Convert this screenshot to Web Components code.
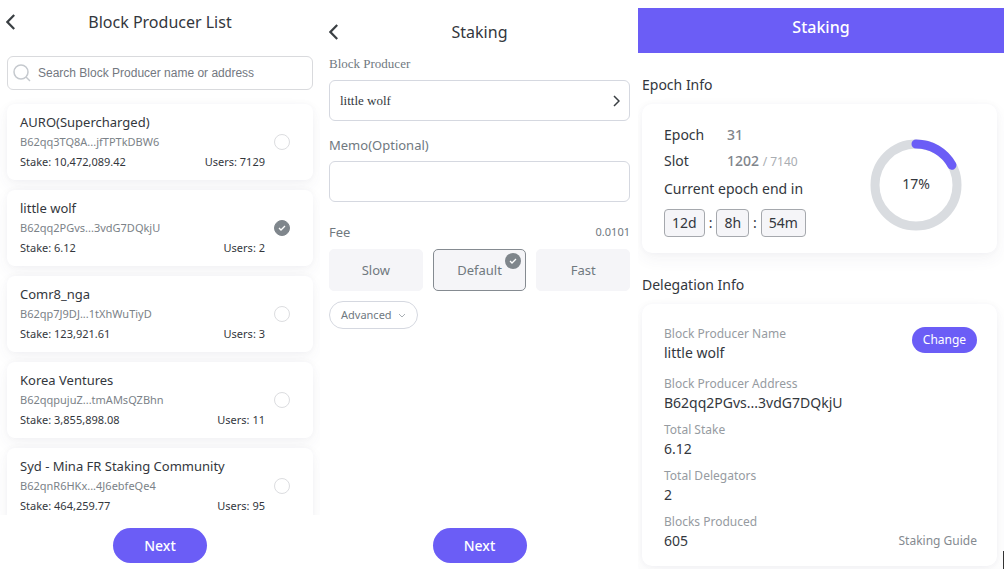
<!DOCTYPE html>
<html lang="en">
<head>
<meta charset="utf-8">
<meta name="viewport" content="width=device-width, initial-scale=1">
<title>Staking</title>
<style>
  html { --accent: #6b5df6; --ink: #33373d; --slate: #70797f; --mute: #969ba1; --line: #d5d8e0; --fill: #f5f5f8; --shadow: 0 6px 16px rgba(60, 60, 110, .06), 0 0 6px rgba(60, 60, 110, .03); }
  body { margin: 0; background: #fff; color: var(--ink); font-family: "Noto Sans", "Open Sans", sans-serif; font-size: 14px; }
</style>
</head>
<body>
<staking-app></staking-app>
<script>
const BASE = `*{box-sizing:border-box}button{font:inherit;color:inherit;cursor:pointer;margin:0}h1,h2,p,dl,dd{margin:0;font-weight:400}`;
const define = (name, html, setup) => {
  const template = document.createElement('template');
  template.innerHTML = html;
  customElements.define(name, class extends HTMLElement {
    constructor() {
      super();
      this.attachShadow({ mode: 'open' }).append(template.content.cloneNode(true));
    }
    connectedCallback() { if (setup) setup(this, this.shadowRoot); }
  });
};

define('nav-header', `
<style>${BASE}
  :host { display: block; }
  header { display: grid; grid-template-columns: 24px 1fr 24px; align-items: center; height: 28px; }
  button { border: 0; padding: 0; background: none; height: 24px; display: flex; align-items: center; }
  svg { fill: none; stroke: #3a3f43; stroke-width: 2.2; }
  h1 { font-size: 16px; line-height: 28px; text-align: center; }
</style>
<header>
  <button type="button" aria-label="Back"><svg width="10" height="16" viewBox="0 0 10 16"><path d="M8.2 1 1.4 8l6.8 7"/></svg></button>
  <h1><slot></slot></h1>
</header>`);

define('pill-button', `
<style>${BASE}
  :host { display: flex; justify-content: center; }
  button { border: 0; border-radius: 18px; width: 94px; height: 35px; padding: 0; background: var(--accent); color: #fff; font-size: 14px; font-weight: 500; line-height: 20px; }
  :host([small]) button { width: 65px; height: 26px; font-size: 12px; font-weight: 400; }
</style>
<button type="button"><slot></slot></button>`);

define('search-box', `
<style>${BASE}
  :host { display: block; }
  label { display: flex; align-items: center; gap: 7px; height: 34px; padding: 0 5px; border: 1px solid #d9dadd; border-radius: 6px; }
  svg { flex: none; fill: none; stroke: #c5c9ce; stroke-width: 1.5; }
  input { flex: 1; min-width: 0; border: 0; outline: 0; padding: 0; background: none; font: 12px/20px "Liberation Sans", Arial, sans-serif; color: var(--ink); }
  input::placeholder { color: #73787f; opacity: 1; }
</style>
<label>
  <svg width="18" height="18" viewBox="0 0 18 18"><circle cx="8" cy="8" r="7"/><path d="m13 13 4 4"/></svg>
  <input type="search" aria-label="Search producers" placeholder="Search Block Producer name or address">
</label>`);

define('producer-card', `
<style>${BASE}
  :host { display: block; flex: none; border-radius: 8px; background: #fff; box-shadow: var(--shadow); }
  label { display: grid; grid-template-columns: 1fr 16px; align-items: center; gap: 9px; height: 76px; padding: 0 23px 0 13px; }
  .name { font-size: 13px; line-height: 20px; }
  .address { font-size: 11px; line-height: 20px; color: #7b8288; }
  .stats { display: flex; justify-content: space-between; font-size: 11px; line-height: 20px; }
  input { appearance: none; width: 16px; height: 16px; margin: 0; border: 1px solid #dcdde0; border-radius: 50%; background: #fff; }
  input:checked { border-color: #7f868c; background: #7f868c url("data:image/svg+xml,%3Csvg xmlns='http://www.w3.org/2000/svg' viewBox='0 0 14 14'%3E%3Cpath d='m4 7 2 2 4-4' fill='none' stroke='white' stroke-width='1.3'/%3E%3C/svg%3E") center / 14px; }
</style>
<label>
  <div>
    <div class="name"><slot name="name"></slot></div>
    <div class="address"><slot name="address"></slot></div>
    <div class="stats"><span>Stake: <slot name="stake"></slot></span><span>Users: <slot name="users"></slot></span></div>
  </div>
  <input type="radio">
</label>`, (host, root) => {
  const radio = root.querySelector('input');
  radio.checked = host.hasAttribute('selected');
  radio.addEventListener('change', () => {
    for (const card of host.parentNode.querySelectorAll('producer-card'))
      if (card !== host) card.shadowRoot.querySelector('input').checked = false;
  });
});

const producers = [
  ['AURO(Supercharged)', 'B62qq3TQ8A...jfTPTkDBW6', '10,472,089.42', '7129'],
  ['little wolf', 'B62qq2PGvs...3vdG7DQkjU', '6.12', '2'],
  ['Comr8_nga', 'B62qp7J9DJ...1tXhWuTiyD', '123,921.61', '3'],
  ['Korea Ventures', 'B62qqpujuZ...tmAMsQZBhn', '3,855,898.08', '11'],
  ['Syd - Mina FR Staking Community', 'B62qnR6HKx...4J6ebfeQe4', '464,259.77', '95'],
];

define('producer-panel', `
<style>${BASE}
  :host { display: flex; flex-direction: column; min-height: 0; padding: 8px 0 6px; }
  nav-header { margin: 0 6px; }
  search-box { margin: 20px 7px 0; }
  .list { flex: 1 1 0; min-height: 0; overflow-y: auto; scrollbar-width: none; display: flex; flex-direction: column; gap: 10px; margin: 8px 0 13px; padding: 6px 7px; }
</style>
<nav-header>Block Producer List</nav-header>
<search-box></search-box>
<div class="list">${producers.map(([name, address, stake, users], i) => `
  <producer-card${i === 1 ? ' selected' : ''}><span slot="name">${name}</span><span slot="address">${address}</span><span slot="stake">${stake}</span><span slot="users">${users}</span></producer-card>`).join('')}
</div>
<pill-button>Next</pill-button>`);

define('fee-option', `
<style>${BASE}
  :host { display: block; flex: 1; }
  button { position: relative; width: 100%; height: 42px; padding: 0; border: 1px solid var(--fill); border-radius: 5px; background: var(--fill); color: var(--slate); font-size: 13px; line-height: 20px; }
  svg { display: none; position: absolute; top: 3px; right: 4px; }
  button[aria-pressed="true"] { border-color: #858b91; }
  button[aria-pressed="true"] svg { display: block; }
</style>
<button type="button"><slot></slot><svg width="16" height="16" viewBox="0 0 16 16"><circle cx="8" cy="8" r="8" fill="#7f868c"/><path d="m5 8 2 2 4-4" fill="none" stroke="#fff" stroke-width="1.3"/></svg></button>`, (host, root) => {
  const button = root.querySelector('button');
  button.setAttribute('aria-pressed', host.hasAttribute('selected'));
  button.addEventListener('click', () => {
    for (const option of host.parentNode.querySelectorAll('fee-option'))
      option.shadowRoot.querySelector('button').setAttribute('aria-pressed', option === host);
  });
});

define('stake-form', `
<style>${BASE}
  :host { display: flex; flex-direction: column; min-height: 0; padding: 18px 8px 6px 9px; color: var(--slate); }
  nav-header { color: var(--ink); }
  label, .label { display: block; font-size: 13px; line-height: 20px; }
  .serif { font-family: "Liberation Serif", "Times New Roman", serif; font-size: 13px; }
  .label.serif { margin-top: 8px; }
  .picker, input { width: 100%; height: 41px; margin-top: 6px; padding: 0 9px 0 10px; border: 1px solid var(--line); border-radius: 6px; background: #fff; color: var(--ink); }
  .picker { display: flex; align-items: center; justify-content: space-between; }
  label { margin-top: 14px; }
  input { display: block; font: inherit; outline: 0; }
  .fee { display: flex; justify-content: space-between; margin-top: 20px; }
  .fee span + span { font-size: 11px; }
  .options { display: flex; gap: 10px; margin-top: 7px; }
  .advanced { display: flex; align-items: center; gap: 6px; align-self: flex-start; height: 28px; margin-top: 10px; padding: 0 11px; border: 1px solid var(--line); border-radius: 14px; background: #fff; font-size: 11px; line-height: 20px; }
  svg { fill: none; stroke: #3a3f43; stroke-width: 1.5; }
  .advanced svg { stroke: #a9afb4; stroke-width: 1; }
  pill-button { margin-top: auto; }
</style>
<nav-header>Staking</nav-header>
<div class="label serif" id="producer">Block Producer</div>
<button type="button" class="picker serif" aria-describedby="producer">little wolf<svg width="7" height="12" viewBox="0 0 7 12"><path d="m1 1 5 5-5 5"/></svg></button>
<label for="memo">Memo(Optional)</label>
<input id="memo" type="text">
<div class="label fee"><span>Fee</span><span>0.0101</span></div>
<div class="options"><fee-option>Slow</fee-option><fee-option selected>Default</fee-option><fee-option>Fast</fee-option></div>
<button type="button" class="advanced">Advanced<svg width="8" height="5" viewBox="0 0 8 5"><path d="m1 1 3 3 3-3"/></svg></button>
<pill-button>Next</pill-button>`);

define('info-card', `
<style>${BASE}
  :host { display: block; }
  h2 { font-size: 14px; line-height: 22px; }
  section { border-radius: 10px; background: #fff; box-shadow: var(--shadow); margin-top: 8px; padding: 18px 20px 16px 22px; }
</style>
<h2><slot name="title"></slot></h2>
<section><slot></slot></section>`);

define('progress-ring', `
<style>${BASE}
  :host { display: block; }
  svg { display: block; fill: none; stroke-width: 9; }
  text { fill: var(--ink); stroke: none; font-size: 14px; text-anchor: middle; }
</style>
<svg width="92" height="92" viewBox="0 0 92 92" role="img" aria-label="Epoch progress">
  <circle cx="46" cy="46" r="41" stroke="#d9dce0"/>
  <circle class="arc" cx="46" cy="46" r="41" stroke="var(--accent)" stroke-linecap="round" pathLength="100" transform="rotate(-90 46 46)"/>
  <text x="46" y="50"></text>
</svg>`, (host, root) => {
  const value = host.getAttribute('value');
  root.querySelector('.arc').setAttribute('stroke-dasharray', value + ' 100');
  root.querySelector('text').textContent = value + '%';
});

define('epoch-info', `
<style>${BASE}
  :host { display: flex; justify-content: space-between; align-items: center; font-size: 14px; line-height: 26px; }
  dl { display: grid; grid-template-columns: 63px auto; }
  dd { color: #80858b; font-weight: 500; }
  small { font-size: 12px; font-weight: 400; color: #a9adb2; }
  p { line-height: 28px; }
  .time { display: flex; align-items: center; gap: 4px; margin-top: 6px; }
  .time b { font-weight: 400; padding: 0 7px; border: 1px solid #a5a8ad; border-radius: 4px; background: var(--fill); }
  progress-ring { margin: 10px 15px 0 0; }
</style>
<div>
  <dl><dt>Epoch</dt><dd>31</dd><dt>Slot</dt><dd>1202 <small>/ 7140</small></dd></dl>
  <p>Current epoch end in</p>
  <div class="time"><b>12d</b>:<b>8h</b>:<b>54m</b></div>
</div>
<progress-ring value="17"></progress-ring>`);

define('delegation-info', `
<style>${BASE}
  :host { display: flex; justify-content: space-between; padding-top: 2px; }
  dl { display: grid; gap: 8px; }
  dl div:first-child { padding-bottom: 4px; }
  dt { font-size: 12px; line-height: 19px; color: var(--mute); }
  dd { font-size: 14px; line-height: 19px; }
  .side { display: flex; flex-direction: column; justify-content: space-between; align-items: flex-end; padding-top: 3px; }
  a { font-size: 12px; line-height: 19px; color: #858a90; text-decoration: none; }
</style>
<dl>
  <div><dt>Block Producer Name</dt><dd>little wolf</dd></div>
  <div><dt>Block Producer Address</dt><dd>B62qq2PGvs...3vdG7DQkjU</dd></div>
  <div><dt>Total Stake</dt><dd>6.12</dd></div>
  <div><dt>Total Delegators</dt><dd>2</dd></div>
  <div><dt>Blocks Produced</dt><dd>605</dd></div>
</dl>
<div class="side"><pill-button small>Change</pill-button><a href="#guide">Staking Guide</a></div>`);

define('staking-overview', `
<style>${BASE}
  :host { position: relative; display: flex; flex-direction: column; min-height: 0; padding-top: 8px; overflow: hidden; }
  h1 { flex: none; height: 45px; background: var(--accent); color: #fff; font-size: 16px; font-weight: 500; line-height: 38px; text-align: center; }
  info-card { margin: 21px 7px 0 4px; }
  .edge { position: absolute; right: 0; bottom: 0; width: 1px; height: 18px; background: #333; }
</style>
<h1>Staking</h1>
<info-card><span slot="title">Epoch Info</span><epoch-info></epoch-info></info-card>
<info-card><span slot="title">Delegation Info</span><delegation-info></delegation-info></info-card>
<div class="edge"></div>`);

define('staking-app', `
<style>${BASE}
  :host { display: grid; grid-template-columns: 320fr 318fr 366fr; grid-template-rows: minmax(0, 1fr); height: 100vh; }
</style>
<producer-panel></producer-panel>
<stake-form></stake-form>
<staking-overview></staking-overview>`);
</script>
</body>
</html>
